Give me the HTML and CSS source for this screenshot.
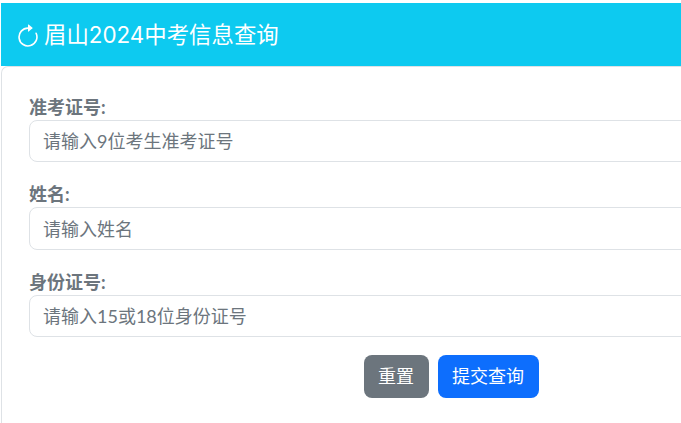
FILE: index.html
```html
<!DOCTYPE html>
<html lang="zh-CN">
<head>
<meta charset="utf-8">
<title>眉山2024中考信息查询</title>
<link rel="stylesheet" href="styles.css">
</head>
<body>
<header class="banner">
  <svg class="banner-icon" width="26" height="26" viewBox="0 0 16 16" aria-hidden="true">
    <path fill="#fff" fill-rule="evenodd" d="M8 3a5 5 0 1 0 4.546 2.914.5.5 0 0 1 .908-.417A6 6 0 1 1 8 2z"/>
    <path fill="#fff" d="M8 4.466V.534a.25.25 0 0 1 .41-.192l2.36 1.966c.12.1.12.284 0 .384L8.41 4.658A.25.25 0 0 1 8 4.466"/>
  </svg>
  <h1 class="banner-title">眉山2024中考信息查询</h1>
</header>
<main class="card">
  <form class="form">
    <div class="field">
      <label class="field-label" for="num">准考证号:</label>
      <input class="field-input" id="num" type="text" placeholder="请输入9位考生准考证号">
    </div>
    <div class="field">
      <label class="field-label" for="name">姓名:</label>
      <input class="field-input" id="name" type="text" placeholder="请输入姓名">
    </div>
    <div class="field">
      <label class="field-label" for="idc">身份证号:</label>
      <input class="field-input" id="idc" type="text" placeholder="请输入15或18位身份证号">
    </div>
    <div class="actions">
      <button class="btn btn-gray" type="reset">重置</button>
      <button class="btn btn-blue" type="button">提交查询</button>
    </div>
  </form>
</main>
</body>
</html>
```
FILE: styles.css
```css
* { box-sizing: border-box; }
html, body { margin: 0; height: 100%; overflow: hidden; background: #fff; }
body {
  width: 681px;
  height: 423px;
  padding: 3px 0 0 1px;
  font-family: "Lato", "Noto Sans CJK SC", "Liberation Sans", sans-serif;
  font-size: 18px;
  line-height: 1.5;
  color: #6c757d;
}
.banner {
  width: 680px;
  height: 63px;
  background: #0dcaf0;
  display: flex;
  align-items: center;
  gap: 3px;
  padding-left: 14px;
  color: #fff;
}
.banner-icon { flex: none; margin-top: 4px; }
.banner-title {
  margin: 0;
  font-family: "Inter", "Noto Sans CJK SC", sans-serif;
  font-size: 22.4px;
  font-weight: 400;
  line-height: 1.5;
}
.card {
  width: 680px;
  height: 357px;
  border: 1px solid #dee2e6;
  border-right: 0;
  border-bottom: 0;
  border-radius: 7px 0 0 0;
  padding: 26px 0 0 27px;
  background: #fff;
}
.form { display: flex; flex-direction: column; }
.field { margin-bottom: 18px; display: flex; flex-direction: column; }
.field-label { font-weight: 700; line-height: 29px; height: 27px; }
.field-input {
  width: calc(100% + 8px);
  height: 42.45px;
  border: 1px solid #dee2e6;
  border-radius: 8px;
  padding: 0 13px;
  font: inherit;
  color: #6c757d;
  background: #fff;
  outline: 0;
}
.field-input::placeholder { color: #6c757d; opacity: 1; }
.actions { display: flex; gap: 9px; padding-left: 335px; }
.btn {
  height: 43px;
  border: 1px solid transparent;
  border-radius: 8px;
  padding: 0 14px 0 13px;
  font: inherit;
  color: #fff;
}
.btn-gray { background: #6c757d; }
.btn-blue { background: #0d6efd; }
```
